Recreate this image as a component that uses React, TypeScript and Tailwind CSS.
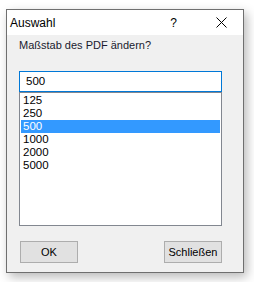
export default function App() {
  const items = ["125", "250", "500", "1000", "2000", "5000"];
  return (
    <div
      className="w-[254px] h-[282px] bg-white pt-[9px] pl-[6px] text-black"
      style={{ fontFamily: '"Liberation Sans", Arial, sans-serif' }}
    >
      <div className="w-[238px] h-[264px] border border-[#6f6f6f] bg-[#f0f0f0] flex flex-col shadow-[3px_4px_10px_rgba(0,0,0,0.28)]">
        {/* Titelleiste */}
        <div className="h-[25px] bg-white flex items-center pl-[3px] text-[12px]">
          <span>Auswahl</span>
          <span className="ml-auto mr-[39px]">?</span>
          <svg width="11" height="11" viewBox="0 0 11 11" className="mr-[16px]">
            <path d="M0.5 0.5 L10.5 10.5 M10.5 0.5 L0.5 10.5" stroke="#000" strokeWidth="1" fill="none" />
          </svg>
        </div>

        <div className="flex flex-col px-[12px] text-[11px]">
          <div className="mt-[2px] h-[16px] leading-[16px] text-[#1a1a2e]">Maßstab des PDF ändern?</div>

          <div className="mt-[18px] w-[203px] h-[21px] border border-[#0078d7] bg-white flex items-center pl-[6px] text-[11.5px]">
            500
          </div>

          <div className="w-[203px] h-[134px] border border-[#828790] bg-white p-[1px] text-[11.5px]">
            {items.map((v) => (
              <div
                key={v}
                className={`h-[13px] leading-[13px] pl-[2px] ${
                  v === "500" ? "bg-[#3399ff] text-white" : ""
                }`}
              >
                {v}
              </div>
            ))}
          </div>

          <div className="mt-[15px] flex justify-between pl-[1px] w-[203px]">
            <button className="w-[58px] h-[22px] bg-[#e1e1e1] border border-[#adadad] flex items-center justify-center">
              OK
            </button>
            <button className="w-[58px] h-[22px] bg-[#e1e1e1] border border-[#adadad] flex items-center justify-center">
              Schließen
            </button>
          </div>
        </div>
      </div>
    </div>
  );
}
